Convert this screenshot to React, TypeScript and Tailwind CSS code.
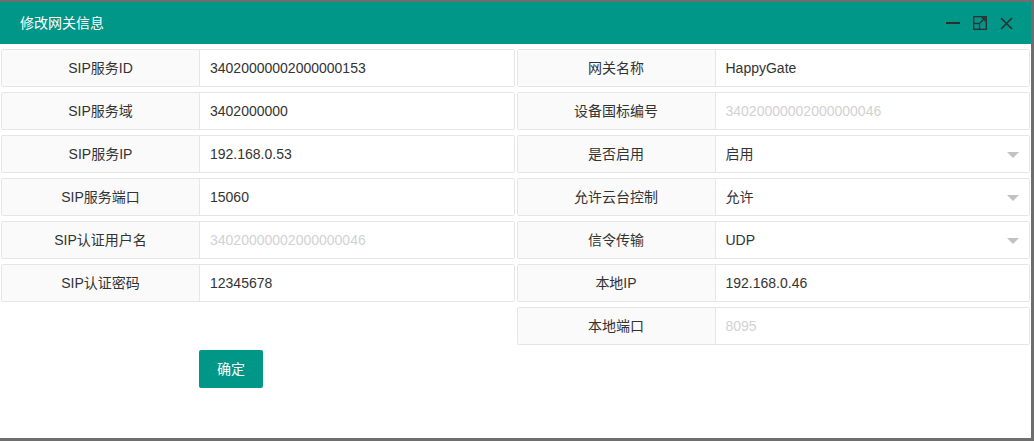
import React from "react";

type Row = { label: string; value: string; muted?: boolean; select?: boolean };

const left: Row[] = [
  { label: "SIP服务ID", value: "34020000002000000153" },
  { label: "SIP服务域", value: "3402000000" },
  { label: "SIP服务IP", value: "192.168.0.53" },
  { label: "SIP服务端口", value: "15060" },
  { label: "SIP认证用户名", value: "34020000002000000046", muted: true },
  { label: "SIP认证密码", value: "12345678" },
];

const right: Row[] = [
  { label: "网关名称", value: "HappyGate" },
  { label: "设备国标编号", value: "34020000002000000046", muted: true },
  { label: "是否启用", value: "启用", select: true },
  { label: "允许云台控制", value: "允许", select: true },
  { label: "信令传输", value: "UDP", select: true },
  { label: "本地IP", value: "192.168.0.46" },
  { label: "本地端口", value: "8095", muted: true },
];

function Field({ row }: { row: Row }) {
  return (
    <div className="flex h-[38px] rounded-[2px] border border-[#e6e6e6]">
      <div className="flex w-[198px] shrink-0 items-center justify-center border-r border-[#e6e6e6] bg-[#fafafa] text-[#333]">
        {row.label}
      </div>
      <div className="relative flex flex-1 items-center bg-white pl-[10px]">
        <span className={row.muted ? "text-[#d2d2d2]" : "text-[#333]"}>{row.value}</span>
        {row.select && (
          <span className="absolute right-[10px] top-[16px] h-0 w-0 border-x-[6px] border-t-[6px] border-x-transparent border-t-[#c2c2c2]" />
        )}
      </div>
    </div>
  );
}

export default function App() {
  return (
    <div
      className="h-[441px] w-[1034px] border-t-2 border-r-[3px] border-b-[3px] border-[#6e6e6e] bg-white text-[14px]"
      style={{ fontFamily: '"Liberation Sans", "Noto Sans CJK SC", sans-serif' }}
    >
      <div className="flex h-[42px] items-center justify-between bg-[#009688] pl-[20px] pr-[18px]">
        <span className="text-white">修改网关信息</span>
        <div className="flex items-center gap-[13px] text-[#2e2e2e]">
          <svg width="14" height="14" viewBox="0 0 14 14">
            <rect x="0" y="6" width="14" height="2" fill="currentColor" />
          </svg>
          <svg width="14" height="14" viewBox="0 0 14 14" fill="none" stroke="currentColor" strokeWidth="1.3">
            <rect x="0.7" y="0.7" width="12.6" height="12.6" />
            <rect x="0.7" y="7.5" width="5.8" height="5.8" fill="#009688" />
            <path d="M7 7 L12 2 M8.5 2 H12 V5.5" />
          </svg>
          <svg width="13" height="13" viewBox="0 0 13 13" stroke="currentColor" strokeWidth="1.6">
            <path d="M1 1 L12 12 M12 1 L1 12" />
          </svg>
        </div>
      </div>
      <div className="grid grid-cols-2 gap-x-[2px] px-[1px] pt-[5px]">
        <div className="flex flex-col gap-[5px]">
          {left.map((r) => (
            <Field key={r.label} row={r} />
          ))}
        </div>
        <div className="flex flex-col gap-[5px]">
          {right.map((r) => (
            <Field key={r.label} row={r} />
          ))}
        </div>
      </div>
      <div className="pl-[199px] pt-[5px]">
        <button className="h-[38px] w-[64px] rounded-[2px] bg-[#009688] text-white">确定</button>
      </div>
    </div>
  );
}
